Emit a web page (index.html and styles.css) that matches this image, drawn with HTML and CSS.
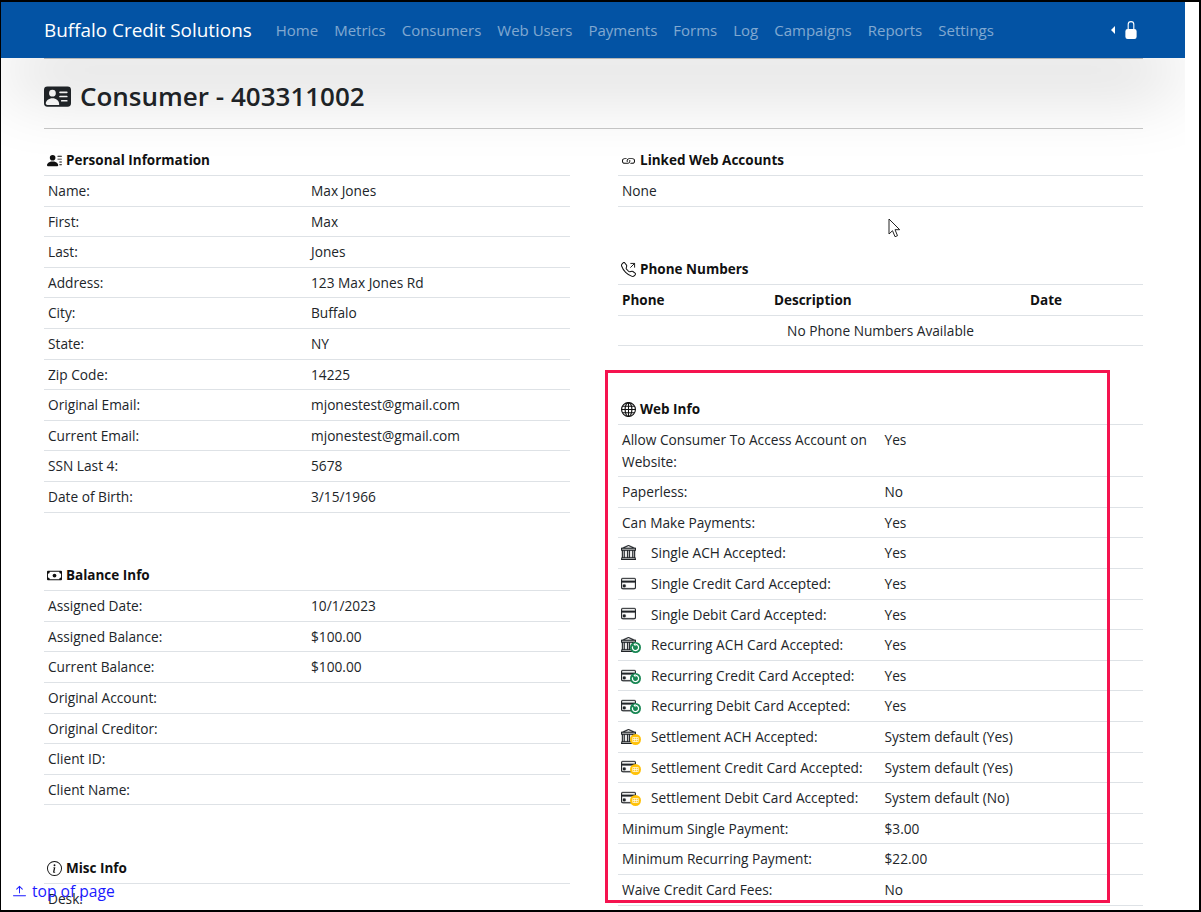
FILE: index.html
```html
<!DOCTYPE html>
<html lang="en">
<head>
<meta charset="utf-8">
<title>Consumer - 403311002</title>
<link rel="stylesheet" href="styles.css">
</head>
<body>
<svg class="defs" width="0" height="0" aria-hidden="true">
  <symbol id="bank" viewBox="0 0 16 16"><path d="m8 0 6.61 3h.89a.5.5 0 0 1 .5.5v2a.5.5 0 0 1-.5.5H15v7a.5.5 0 0 1 .485.38l.5 2a.498.498 0 0 1-.485.62H.5a.498.498 0 0 1-.485-.62l.5-2A.5.5 0 0 1 1 13V6H.5a.5.5 0 0 1-.5-.5v-2A.5.5 0 0 1 .5 3h.89zM3.777 3h8.447L8 1zM2 6v7h1V6zm2 0v7h2.5V6zm3.5 0v7h1V6zm2 0v7H12V6zM13 6v7h1V6zm2-1V4H1v1zm-.39 9H1.39l-.25 1h13.72z"/></symbol>
  <symbol id="card" viewBox="0 0 16 16"><path d="M0 4a2 2 0 0 1 2-2h12a2 2 0 0 1 2 2v8a2 2 0 0 1-2 2H2a2 2 0 0 1-2-2zm2-1a1 1 0 0 0-1 1v1h14V4a1 1 0 0 0-1-1zm13 4H1v5a1 1 0 0 0 1 1h12a1 1 0 0 0 1-1z"/><path d="M2 10a1 1 0 0 1 1-1h1a1 1 0 0 1 1 1v1a1 1 0 0 1-1 1H3a1 1 0 0 1-1-1z"/></symbol>
  <symbol id="recur" viewBox="0 0 16 16"><circle cx="8" cy="8" r="8" fill="#198754"/><path d="M8 3.5a4.5 4.5 0 1 1-4.2 2.9" fill="none" stroke="#fff" stroke-width="1.8"/><path d="M8 1v5L5 3.500z" fill="#fff"/></symbol>
  <symbol id="settle" viewBox="0 0 16 16"><circle cx="8" cy="8" r="8" fill="#ffc107"/><path d="M4 5h8v6H4zM4 8h8M6.700 5v6M9.300 5v6" fill="none" stroke="#fff" stroke-width="1"/></symbol>
</svg>

<div class="frame">
  <div class="viewport">
    <nav class="navbar">
      <a class="brand" href="#">Buffalo Credit Solutions</a>
      <ul class="nav-links">
        <li><a href="#">Home</a></li>
        <li><a href="#">Metrics</a></li>
        <li><a href="#">Consumers</a></li>
        <li><a href="#">Web Users</a></li>
        <li><a href="#">Payments</a></li>
        <li><a href="#">Forms</a></li>
        <li><a href="#">Log</a></li>
        <li><a href="#">Campaigns</a></li>
        <li><a href="#">Reports</a></li>
        <li><a href="#">Settings</a></li>
      </ul>
      <div class="nav-user">
        <span class="caret"></span>
        <svg class="lock" viewBox="0 0 16 16" fill="#fff"><path d="M8 1a2 2 0 0 1 2 2v4H6V3a2 2 0 0 1 2-2m3 6V3a3 3 0 0 0-6 0v4a2 2 0 0 0-2 2v5a2 2 0 0 0 2 2h6a2 2 0 0 0 2-2V9a2 2 0 0 0-2-2"/></svg>
      </div>
    </nav>

    <main class="page">
      <h1 class="title">
        <svg class="title-icon" viewBox="0 0 16 16" fill="#212529"><path d="M0 4a2 2 0 0 1 2-2h12a2 2 0 0 1 2 2v8a2 2 0 0 1-2 2H2a2 2 0 0 1-2-2zm9 1.500a.5.5 0 0 0 .5.5h4a.5.5 0 0 0 0-1h-4a.5.5 0 0 0-.5.5M9 8a.5.5 0 0 0 .5.5h4a.5.5 0 0 0 0-1h-4A.5.5 0 0 0 9 8m1 2.500a.5.5 0 0 0 .5.5h3a.5.5 0 0 0 0-1h-3a.5.5 0 0 0-.5.5m-1 2C9 10.567 7.210 9 5 9c-2.086 0-3.800 1.398-3.984 3.181A1 1 0 0 0 2 13h6.960q.04-.245.04-.5M7 6a2 2 0 1 0-4 0 2 2 0 0 0 4 0"/></svg>
        <span>Consumer - 403311002</span>
      </h1>
      <hr class="rule">

      <div class="columns">
        <div class="column">
          <table class="info">
            <thead><tr><th colspan="2"><svg class="hicon" viewBox="0 0 16 16"><path d="M6 8a3 3 0 1 0 0-6 3 3 0 0 0 0 6m-5 6s-1 0-1-1 1-4 6-4 6 3 6 4-1 1-1 1zM11 3.500a.5.5 0 0 1 .5-.5h4a.5.5 0 0 1 0 1h-4a.5.5 0 0 1-.5-.5m.5 2.500a.5.5 0 0 0 0 1h4a.5.5 0 0 0 0-1zm2 3a.5.5 0 0 0 0 1h2a.5.5 0 0 0 0-1zm0 3a.5.5 0 0 0 0 1h2a.5.5 0 0 0 0-1z"/></svg>Personal Information</th></tr></thead>
            <tbody>
              <tr><td>Name:</td><td>Max Jones</td></tr>
              <tr><td>First:</td><td>Max</td></tr>
              <tr><td>Last:</td><td>Jones</td></tr>
              <tr><td>Address:</td><td>123 Max Jones Rd</td></tr>
              <tr><td>City:</td><td>Buffalo</td></tr>
              <tr><td>State:</td><td>NY</td></tr>
              <tr><td>Zip Code:</td><td>14225</td></tr>
              <tr><td>Original Email:</td><td>mjonestest@gmail.com</td></tr>
              <tr><td>Current Email:</td><td>mjonestest@gmail.com</td></tr>
              <tr><td>SSN Last 4:</td><td>5678</td></tr>
              <tr><td>Date of Birth:</td><td>3/15/1966</td></tr>
            </tbody>
          </table>

          <table class="info">
            <thead><tr><th colspan="2"><svg class="hicon" viewBox="0 0 16 16"><path d="M8 10a2 2 0 1 0 0-4 2 2 0 0 0 0 4"/><path d="M0 4a1 1 0 0 1 1-1h14a1 1 0 0 1 1 1v8a1 1 0 0 1-1 1H1a1 1 0 0 1-1-1zm3 0a2 2 0 0 1-2 2v4a2 2 0 0 1 2 2h10a2 2 0 0 1 2-2V6a2 2 0 0 1-2-2z"/></svg>Balance Info</th></tr></thead>
            <tbody>
              <tr><td>Assigned Date:</td><td>10/1/2023</td></tr>
              <tr><td>Assigned Balance:</td><td>$100.00</td></tr>
              <tr><td>Current Balance:</td><td>$100.00</td></tr>
              <tr><td>Original Account:</td><td></td></tr>
              <tr><td>Original Creditor:</td><td></td></tr>
              <tr><td>Client ID:</td><td></td></tr>
              <tr><td>Client Name:</td><td></td></tr>
            </tbody>
          </table>

          <table class="info">
            <thead><tr><th colspan="2"><svg class="hicon" viewBox="0 0 16 16"><path d="M8 15A7 7 0 1 1 8 1a7 7 0 0 1 0 14m0 1A8 8 0 1 0 8 0a8 8 0 0 0 0 16"/><path d="m8.930 6.588-2.290.287-.082.380.450.083c.294.070.352.176.288.469l-.738 3.468c-.194.897.105 1.319.808 1.319.545 0 1.178-.252 1.465-.598l.088-.416c-.2.176-.492.246-.686.246-.275 0-.375-.193-.304-.533zM9 4.500a1 1 0 1 1-2 0 1 1 0 0 1 2 0"/></svg>Misc Info</th></tr></thead>
            <tbody>
              <tr><td>Desk:</td><td></td></tr>
            </tbody>
          </table>
        </div>

        <div class="column">
          <table class="info">
            <thead><tr><th colspan="2"><svg class="hicon" viewBox="0 0 16 16"><path d="M6.354 5.500H4a3 3 0 0 0 0 6h3a3 3 0 0 0 2.830-4H9q-.13 0-.25.031A2 2 0 0 1 7 10.500H4a2 2 0 1 1 0-4h1.535c.218-.376.495-.714.82-1z"/><path d="M9 5.500a3 3 0 0 0-2.830 4h1.098A2 2 0 0 1 9 6.500h3a2 2 0 1 1 0 4h-1.535a4 4 0 0 1-.82 1H12a3 3 0 1 0 0-6z"/></svg>Linked Web Accounts</th></tr></thead>
            <tbody><tr><td colspan="2">None</td></tr></tbody>
          </table>

          <table class="info phones">
            <colgroup><col class="col-phone"><col class="col-desc"><col></colgroup>
            <thead>
              <tr><th colspan="3"><svg class="hicon" viewBox="0 0 16 16"><path d="M3.654 1.328a.678.678 0 0 0-1.015-.063L1.605 2.300c-.483.484-.661 1.169-.45 1.770a17.600 17.600 0 0 0 4.168 6.608 17.600 17.600 0 0 0 6.608 4.168c.601.211 1.286.033 1.770-.45l1.034-1.034a.678.678 0 0 0-.063-1.015l-2.307-1.794a.68.68 0 0 0-.58-.122l-2.190.547a1.750 1.750 0 0 1-1.657-.459L5.482 8.062a1.750 1.750 0 0 1-.46-1.657l.548-2.190a.68.68 0 0 0-.122-.58zM1.884.511a1.745 1.745 0 0 1 2.612.163L6.290 2.980c.329.423.445.974.315 1.494l-.547 2.190a.68.68 0 0 0 .178.643l2.457 2.457a.68.68 0 0 0 .644.178l2.189-.547a1.750 1.750 0 0 1 1.494.315l2.306 1.794c.829.645.905 1.870.163 2.611l-1.034 1.034c-.74.74-1.846 1.065-2.877.702a18.600 18.600 0 0 1-7.010-4.420 18.600 18.600 0 0 1-4.420-7.009c-.362-1.030-.037-2.137.703-2.877z"/><path d="M10 1.500h4.500V6M14.500 1.500 10 6" fill="none" stroke="currentColor"/></svg>Phone Numbers</th></tr>
              <tr><th>Phone</th><th>Description</th><th>Date</th></tr>
            </thead>
            <tbody><tr><td colspan="3" class="center">No Phone Numbers Available</td></tr></tbody>
          </table>

          <table class="info">
            <thead><tr><th colspan="2"><svg class="hicon" viewBox="0 0 16 16"><circle cx="8" cy="8" r="7.400" fill="none" stroke="currentColor" stroke-width="1.200"/><ellipse cx="8" cy="8" rx="3.600" ry="7.400" fill="none" stroke="currentColor" stroke-width="1.200"/><path d="M8 .5v15M.6 8h14.800M1.500 4.500h13M1.500 11.500h13" fill="none" stroke="currentColor" stroke-width="1.100"/></svg>Web Info</th></tr></thead>
            <tbody>
              <tr><td>Allow Consumer To Access Account on Website:</td><td>Yes</td></tr>
              <tr><td>Paperless:</td><td>No</td></tr>
              <tr><td>Can Make Payments:</td><td>Yes</td></tr>
              <tr><td><span class="pay"><span class="pay-icon"><svg class="base"><use href="#bank"/></svg></span>Single ACH Accepted:</span></td><td>Yes</td></tr>
              <tr><td><span class="pay"><span class="pay-icon"><svg class="base"><use href="#card"/></svg></span>Single Credit Card Accepted:</span></td><td>Yes</td></tr>
              <tr><td><span class="pay"><span class="pay-icon"><svg class="base"><use href="#card"/></svg></span>Single Debit Card Accepted:</span></td><td>Yes</td></tr>
              <tr><td><span class="pay"><span class="pay-icon"><svg class="base"><use href="#bank"/></svg><svg class="badge"><use href="#recur"/></svg></span>Recurring ACH Card Accepted:</span></td><td>Yes</td></tr>
              <tr><td><span class="pay"><span class="pay-icon"><svg class="base"><use href="#card"/></svg><svg class="badge"><use href="#recur"/></svg></span>Recurring Credit Card Accepted:</span></td><td>Yes</td></tr>
              <tr><td><span class="pay"><span class="pay-icon"><svg class="base"><use href="#card"/></svg><svg class="badge"><use href="#recur"/></svg></span>Recurring Debit Card Accepted:</span></td><td>Yes</td></tr>
              <tr><td><span class="pay"><span class="pay-icon"><svg class="base"><use href="#bank"/></svg><svg class="badge"><use href="#settle"/></svg></span>Settlement ACH Accepted:</span></td><td>System default (Yes)</td></tr>
              <tr><td><span class="pay"><span class="pay-icon"><svg class="base"><use href="#card"/></svg><svg class="badge"><use href="#settle"/></svg></span>Settlement Credit Card Accepted:</span></td><td>System default (Yes)</td></tr>
              <tr><td><span class="pay"><span class="pay-icon"><svg class="base"><use href="#card"/></svg><svg class="badge"><use href="#settle"/></svg></span>Settlement Debit Card Accepted:</span></td><td>System default (No)</td></tr>
              <tr><td>Minimum Single Payment:</td><td>$3.00</td></tr>
              <tr><td>Minimum Recurring Payment:</td><td>$22.00</td></tr>
              <tr><td>Waive Credit Card Fees:</td><td>No</td></tr>
            </tbody>
          </table>
        </div>
      </div>
    </main>
  </div>

  <a class="top-link" href="#"><svg class="top-icon" viewBox="0 0 16 16" fill="currentColor"><path fill-rule="evenodd" d="M8 10a.5.5 0 0 0 .5-.5V3.707l2.146 2.147a.5.5 0 0 0 .708-.708l-3-3a.5.5 0 0 0-.708 0l-3 3a.5.5 0 1 0 .708.708L7.500 3.707V9.500a.5.5 0 0 0 .5.5m-7 2.500a.5.5 0 0 1 .5-.5h13a.5.5 0 0 1 0 1h-13a.5.5 0 0 1-.5-.5"/></svg>top of page</a>
  <div class="highlight"></div>
  <svg class="pointer" viewBox="0 0 13 20"><path d="M1 1v15l3.500-3.300 2.500 6 2.500-1-2.500-6h4.700z" fill="#fff" stroke="#222" stroke-width="1"/></svg>
</div>
</body>
</html>
```

FILE: styles.css
```css
* { box-sizing: border-box; }

html, body { margin: 0; padding: 0; background: #fff; }

body {
  font-family: "Open Sans", "Noto Sans", sans-serif;
  font-size: 13.7px;
  line-height: 21.6px;
  color: #212529;
}

.defs { position: absolute; }

.frame {
  position: relative;
  width: 1201px;
  height: 912px;
  border: 2px solid #000;
  border-left-width: 1px;
  overflow: hidden;
}

.viewport {
  width: 1184px;
  height: 908px;
  overflow: hidden;
}

.navbar {
  position: relative;
  z-index: 2;
  display: flex;
  align-items: center;
  height: 56px;
  padding: 0 43px;
  background: #0353a4;
  box-shadow: 0 40px 70px -10px rgba(0, 0, 0, .2);
}

.brand {
  margin-right: 16px;
  color: #fff;
  font-size: 18.900px;
  line-height: 30px;
  text-decoration: none;
}

.nav-links {
  display: flex;
  flex: 1;
  margin: 0;
  padding: 0;
  list-style: none;
}

.nav-links a {
  display: block;
  padding: 8px;
  color: rgba(255, 255, 255, .5);
  font-size: 15px;
  line-height: 24px;
  text-decoration: none;
}

.nav-user {
  display: flex;
  align-items: center;
  gap: 7px;
  margin-right: 2px;
}

.caret {
  width: 0;
  height: 0;
  border: 4px solid transparent;
  border-left-width: 0;
  border-right-color: #fff;
}

.lock { width: 18px; height: 18px; }

.page {
  margin: 0 42px 0 43px;
  padding-top: 20.400px;
  border-top: 1px solid #c4c4c4;
}

.title {
  display: flex;
  align-items: center;
  gap: 9px;
  margin: 0 0 15px;
  font-size: 26px;
  font-weight: 600;
  line-height: 34px;
}

.title-icon { width: 27px; height: 27px; }

.rule {
  margin: 0 0 16.100px;
  border: 0;
  border-top: 1px solid #c8c8c8;
}

.columns {
  display: grid;
  grid-template-columns: 526px 525px;
  column-gap: 48px;
}

.info {
  width: 100%;
  margin-bottom: 48px;
  border-collapse: collapse;
  table-layout: fixed;
}

.info th,
.info td {
  padding: 4px;
  border-bottom: 1px solid #dee2e6;
  text-align: left;
  vertical-align: top;
}

.info th {
  padding: 4.500px 4px 3.500px;
  font-size: 13.500px;
  font-weight: 700;
  color: #111;
}

.hicon {
  width: 15px;
  height: 15px;
  margin: 0 4px 0 -1px;
  vertical-align: -3px;
  fill: currentColor;
}

.col-phone { width: 152px; }
.col-desc { width: 256px; }

.info td.center { text-align: center; }

.pay { display: flex; align-items: center; }

.pay-icon {
  position: relative;
  flex: none;
  width: 30px;
  height: 16px;
  margin-left: -1px;
}

.base {
  display: block;
  width: 15px;
  height: 15px;
  fill: #212529;
  stroke: #212529;
  stroke-width: .3px;
}

.badge {
  position: absolute;
  left: 9px;
  top: 5px;
  width: 11px;
  height: 11px;
}

.top-link {
  position: absolute;
  left: 11px;
  top: 877px;
  z-index: 3;
  display: flex;
  align-items: center;
  gap: 5px;
  color: #1a1aff;
  font-size: 15.600px;
  line-height: 24px;
  text-decoration: none;
}

.top-icon { width: 15px; height: 15px; }

.highlight {
  position: absolute;
  left: 604px;
  top: 368px;
  z-index: 3;
  width: 505px;
  height: 533px;
  border: 3px solid #f5134f;
}

.pointer {
  position: absolute;
  left: 887px;
  top: 216px;
  z-index: 3;
  width: 13px;
  height: 20px;
}
```
